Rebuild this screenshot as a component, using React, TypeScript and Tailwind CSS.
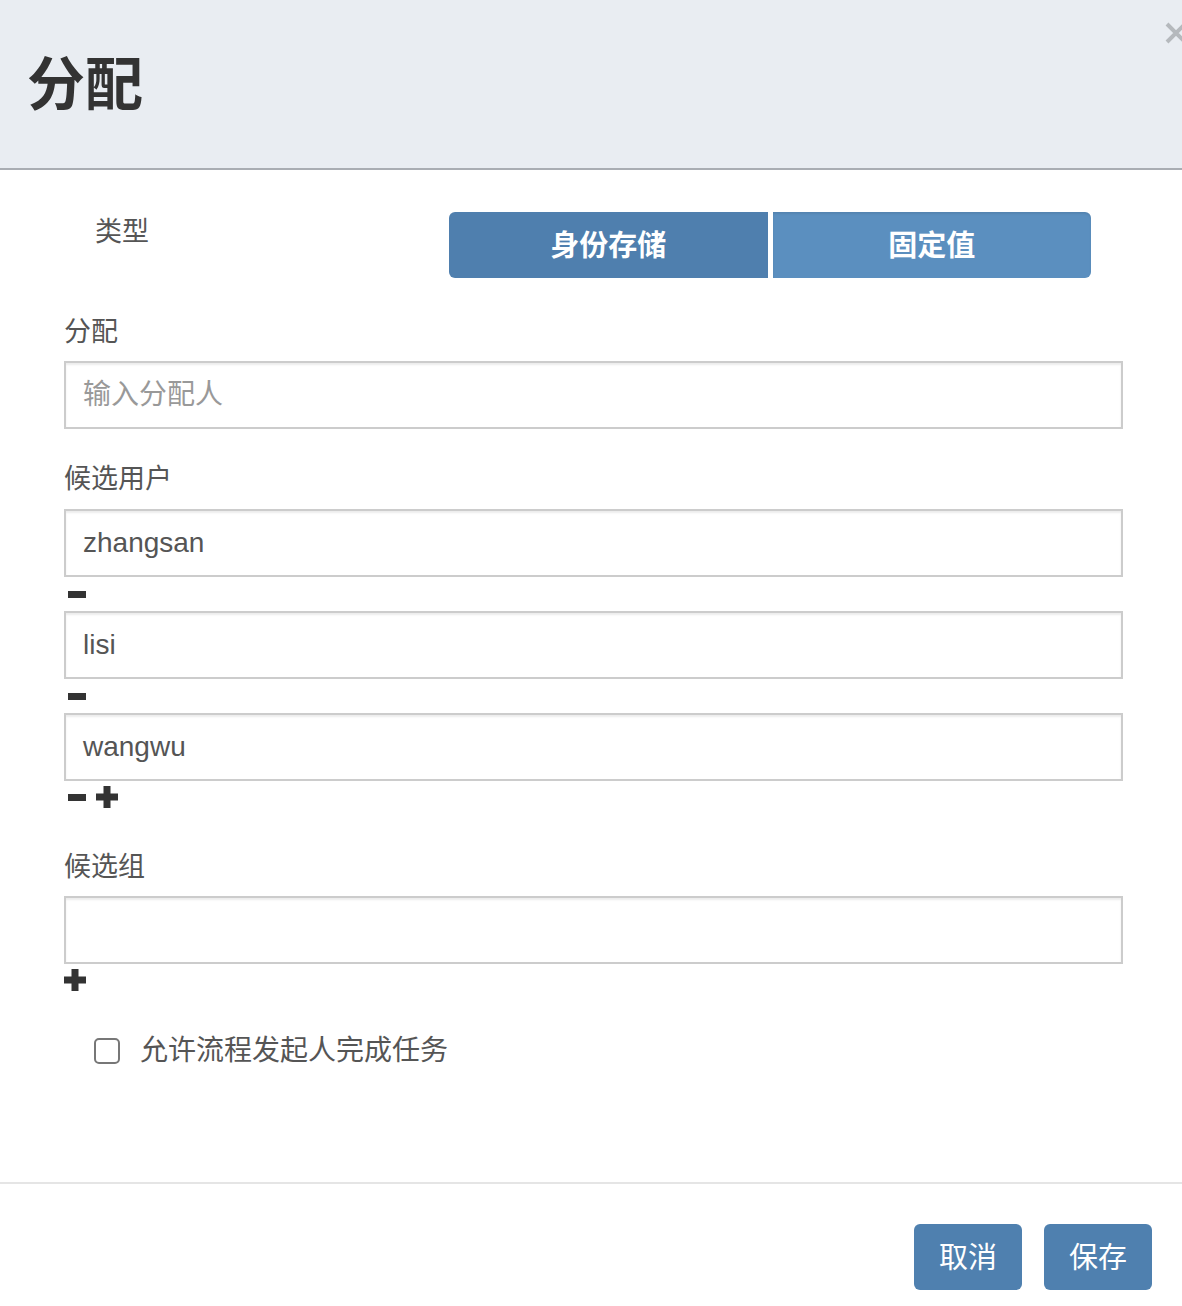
import React from 'react';

const font = { fontFamily: '"Liberation Sans", "Noto Sans CJK SC", sans-serif' };

function Minus() {
  return <span className="block w-[18px] h-[7px] bg-[#333]" />;
}

function Plus() {
  return (
    <svg width="22" height="22" viewBox="0 0 22 22" className="block">
      <rect x="0" y="7.5" width="22" height="7" fill="#333" />
      <rect x="7.5" y="0" width="7" height="22" fill="#333" />
    </svg>
  );
}

function TextInput({ value, placeholder }: { value?: string; placeholder?: string }) {
  return (
    <div className="h-[68px] border-2 border-[#cccccc] bg-white shadow-[inset_0_2px_2px_rgba(0,0,0,0.075)] flex items-center px-[17px] text-[28px]">
      {value ? (
        <span className="text-[#555]">{value}</span>
      ) : (
        <span className="text-[#999]">{placeholder}</span>
      )}
    </div>
  );
}

const users = ['zhangsan', 'lisi', 'wangwu'];

export default function App() {
  return (
    <div className="w-[1182px] h-[1306px] bg-white overflow-hidden" style={font}>
      {/* header */}
      <div className="relative h-[170px] bg-[#e9edf2] border-b-2 border-[#a9adb3] flex items-center pl-[27px]">
        <h1 className="text-[58px] font-bold text-[#333] leading-none mt-[2px]">分配</h1>
        <svg width="24" height="24" viewBox="0 0 24 24" className="absolute left-[1164px] top-[21px]">
          <path d="M3 3 L21 21 M21 3 L3 21" stroke="#b5b9bd" strokeWidth="4" />
        </svg>
      </div>

      {/* body */}
      <div className="pl-[64px] pr-[59px] pt-[42px] h-[1012px]">
        <div className="flex items-start">
          <div className="w-[385px] pl-[31px] text-[27px] leading-[40px] text-[#555]">类型</div>
          <div className="flex w-[642px] h-[66px] gap-[5px]">
            <button className="flex-1 rounded-l-[6px] bg-[#4f7fae] text-white text-[29px] font-bold pt-[4px]">身份存储</button>
            <button className="flex-1 rounded-r-[6px] bg-[#5b8fbf] text-white text-[29px] font-bold pt-[4px] shadow-[inset_0_2px_2px_rgba(0,0,0,0.08)]">固定值</button>
          </div>
        </div>

        <div className="mt-[32px] pt-[2px] text-[27px] leading-[40px] text-[#555] mb-[9px]">分配</div>
        <TextInput placeholder="输入分配人" />

        <div className="mt-[28px] pt-[2px] text-[27px] leading-[40px] text-[#555] mb-[10px]">候选用户</div>
        {users.map((u, i) => (
          <div key={u}>
            <TextInput value={u} />
            <div className={`flex items-center gap-[10px] pl-[4px] ${i === users.length - 1 ? 'h-[32px]' : 'h-[34px]'}`}>
              <Minus />
              {i === users.length - 1 && <Plus />}
            </div>
          </div>
        ))}

        <div className="mt-[32px] pt-[2px] text-[27px] leading-[40px] text-[#555] mb-[9px]">候选组</div>
        <TextInput />
        <div className="h-[32px] flex items-center">
          <Plus />
        </div>

        <label className="mt-[34px] ml-[30px] flex items-center gap-[20px] text-[28px] text-[#555]">
          <span className="block w-[26px] h-[26px] rounded-[5px] border-2 border-[#777] bg-white" />
          允许流程发起人完成任务
        </label>
      </div>

      {/* footer */}
      <div className="border-t-2 border-[#e5e5e5] flex justify-end gap-[22px] pr-[30px] pt-[40px]">
        <button className="w-[108px] h-[66px] rounded-[6px] bg-[#4f80af] text-white text-[29px] pt-[3px]">取消</button>
        <button className="w-[108px] h-[66px] rounded-[6px] bg-[#4f80af] text-white text-[29px] pt-[3px]">保存</button>
      </div>
    </div>
  );
}
